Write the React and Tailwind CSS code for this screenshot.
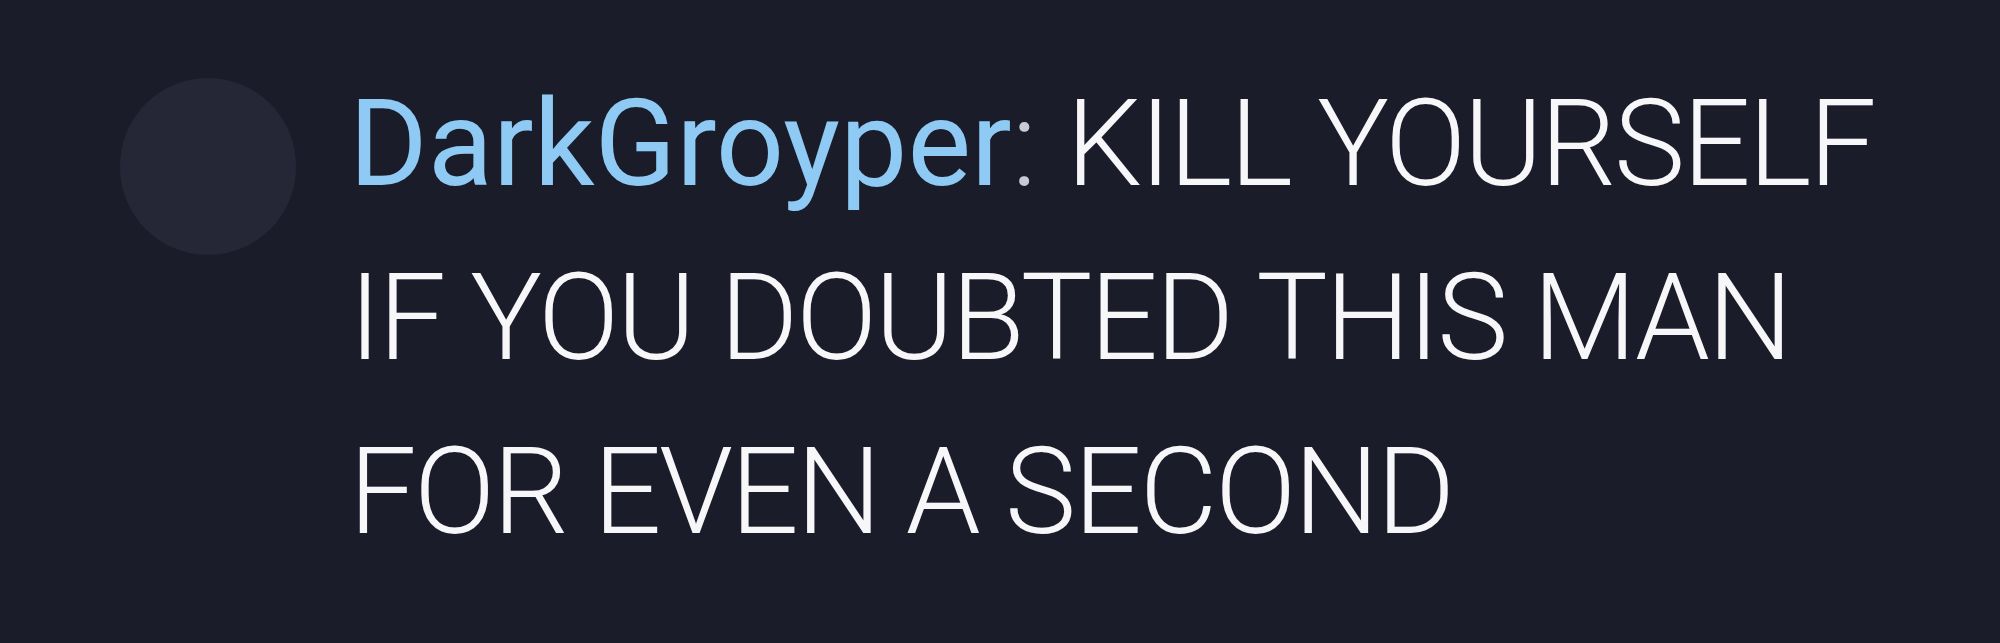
import React from 'react';

const ChatMessage = ({ user, text }) => {
    return (
        <div className="flex items-start gap-[53px] pl-[120px] pt-[57px]">
            {/* avatar placeholder */}
            <div className="mt-[21px] h-[177px] w-[176px] shrink-0 rounded-full bg-[#252737]"></div>
            <p className="w-[1570px] text-[120px] leading-[174px] font-['Roboto',sans-serif] font-light text-[#f7f7f9]">
                <span className="font-normal text-[#8fcaf4]">{user}</span>
                <span className="text-[#c9cbd4]">:</span>{' '}
                <span className="tracking-[-2.5px]">{text}</span>
            </p>
        </div>
    );
};

export default function App() {
    return (
        <div className="h-[643px] w-full overflow-hidden bg-[#1a1c2a]">
            <ChatMessage user="DarkGroyper" text="KILL YOURSELF IF YOU DOUBTED THIS MAN FOR EVEN A SECOND" />
        </div>
    );
}
